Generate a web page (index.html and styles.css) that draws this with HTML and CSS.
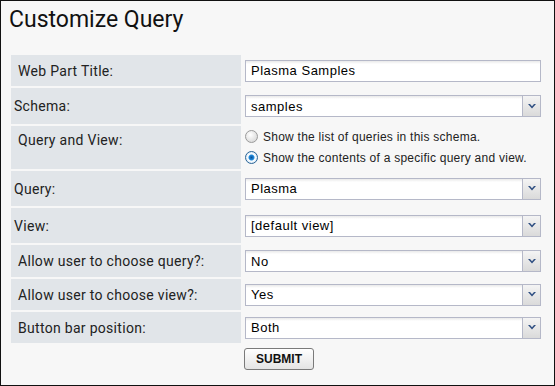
FILE: index.html
```html
<!DOCTYPE html>
<html lang="en">
<head>
    <meta charset="UTF-8">
    <title>Customize Query</title>
    <link rel="stylesheet" href="styles.css">
</head>
<body>
    <div class="panel">
        <h1>Customize Query</h1>
        <form class="form">
            <div class="label wide">Web Part Title:</div>
            <div class="field">
                <input class="text" type="text" value="Plasma Samples">
            </div>

            <div class="label">Schema:</div>
            <div class="field">
                <div class="combo"><span>samples</span><i class="trigger"><svg width="8" height="5" viewBox="0 0 8 5"><path d="M0 0h2l2 2.2L6 0h2L4 4.5z" fill="#2f4f82"/></svg></i></div>
            </div>

            <div class="label wide top">Query and View:</div>
            <div class="field radios">
                <label class="radio"><input type="radio" name="mode"> Show the list of queries in this schema.</label>
                <label class="radio"><input type="radio" name="mode" checked> Show the contents of a specific query and view.</label>
            </div>

            <div class="label">Query:</div>
            <div class="field">
                <div class="combo"><span>Plasma</span><i class="trigger"><svg width="8" height="5" viewBox="0 0 8 5"><path d="M0 0h2l2 2.2L6 0h2L4 4.5z" fill="#2f4f82"/></svg></i></div>
            </div>

            <div class="label">View:</div>
            <div class="field">
                <div class="combo"><span>[default view]</span><i class="trigger"><svg width="8" height="5" viewBox="0 0 8 5"><path d="M0 0h2l2 2.2L6 0h2L4 4.5z" fill="#2f4f82"/></svg></i></div>
            </div>

            <div class="label wide">Allow user to choose query?:</div>
            <div class="field">
                <div class="combo"><span>No</span><i class="trigger"><svg width="8" height="5" viewBox="0 0 8 5"><path d="M0 0h2l2 2.2L6 0h2L4 4.5z" fill="#2f4f82"/></svg></i></div>
            </div>

            <div class="label wide">Allow user to choose view?:</div>
            <div class="field">
                <div class="combo"><span>Yes</span><i class="trigger"><svg width="8" height="5" viewBox="0 0 8 5"><path d="M0 0h2l2 2.2L6 0h2L4 4.5z" fill="#2f4f82"/></svg></i></div>
            </div>

            <div class="label wide">Button bar position:</div>
            <div class="field">
                <div class="combo"><span>Both</span><i class="trigger"><svg width="8" height="5" viewBox="0 0 8 5"><path d="M0 0h2l2 2.2L6 0h2L4 4.5z" fill="#2f4f82"/></svg></i></div>
            </div>

            <div class="actions">
                <button type="button" class="submit">SUBMIT</button>
            </div>
        </form>
    </div>
</body>
</html>
```

FILE: styles.css
```css
* {
    box-sizing: border-box;
}

body {
    margin: 0;
    background: #f7f7f7;
}

.panel {
    width: 555px;
    height: 386px;
    border: 1px solid #111;
    background: #f7f7f7;
    font-family: Roboto, "Liberation Sans", sans-serif;
}

h1 {
    margin: 5px 0 21px 8px;
    font-size: 23px;
    line-height: 28px;
    font-weight: 400;
    color: #111;
}

.form {
    display: grid;
    grid-template-columns: 230px 296px;
    grid-template-rows: 31px 36px 43px 35px 35px 32px 31px 31px auto;
    column-gap: 4px;
    row-gap: 2px;
    margin-left: 10px;
}

.label {
    display: flex;
    align-items: center;
    padding-left: 3px;
    background: #e1e5e9;
    font-size: 14px;
    letter-spacing: 0.3px;
    color: #222;
}

.label.wide {
    padding-left: 7px;
}

.label.top {
    align-items: flex-start;
    padding-top: 6px;
}

.field {
    display: flex;
    align-items: center;
}

.text,
.combo {
    width: 296px;
    height: 22px;
    border: 1px solid #b5b8c8;
    background: linear-gradient(#e9e9e9, #fff 3px);
    font-family: "Liberation Sans", Arial, sans-serif;
    font-size: 13px;
    letter-spacing: 0.5px;
    color: #000;
}

.text {
    padding: 0 5px;
    outline: none;
}

.combo {
    display: flex;
    align-items: center;
    padding-left: 5px;
}

.combo span {
    flex: 1;
}

.trigger {
    display: flex;
    align-items: center;
    justify-content: center;
    width: 18px;
    height: 20px;
    border-left: 1px solid #b5b8c8;
    background: linear-gradient(#f4f4f4, #dadada);
}

.radios {
    flex-direction: column;
    align-items: flex-start;
}

.radio {
    display: flex;
    align-items: center;
    height: 21px;
    font-family: "Liberation Sans", Arial, sans-serif;
    font-size: 12px;
    letter-spacing: 0.25px;
    color: #222;
}

.radio input {
    appearance: none;
    width: 13px;
    height: 13px;
    margin: 0 5px 0 0;
    border: 1px solid #9a9a9a;
    border-radius: 50%;
    background: radial-gradient(circle at 40% 35%, #fff, #d0d0d0);
}

.radio input:checked {
    border-color: #2a6496;
    background: radial-gradient(circle, #0a4f96 0, #1f8ce0 2.5px, #ffffff 3.5px, #cfe4f5 6px);
}

.actions {
    grid-column: 2;
    padding-top: 3px;
}

.submit {
    width: 70px;
    height: 22px;
    margin-left: -1px;
    border: 1px solid #7a7a7a;
    border-radius: 3px;
    background: linear-gradient(#ffffff, #e4e4e4);
    font-family: "Liberation Sans", Arial, sans-serif;
    font-size: 12px;
    font-weight: bold;
    color: #111;
}
```
